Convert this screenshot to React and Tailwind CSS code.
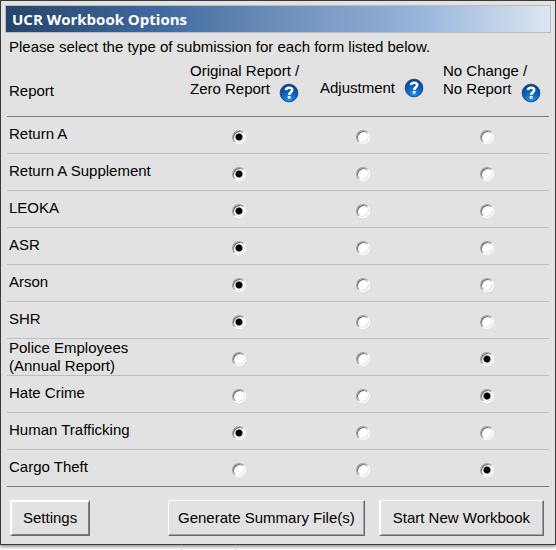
import { useState } from "react";
import clsx from "clsx";

const COLUMNS = [
    { id: "original", lines: ["Original Report /", "Zero Report"], cellClass: "pl-[13px]", gapClass: "gap-[9px]" },
    { id: "adjustment", lines: ["Adjustment"], cellClass: "pl-[19px]", gapClass: "gap-[9px]" },
    { id: "none", lines: ["No Change /", "No Report"], cellClass: "pl-[18px]", gapClass: "gap-[10px]" },
];

const REPORTS = [
    { id: "return-a", name: "Return A", initial: "original" },
    { id: "return-a-supplement", name: "Return A Supplement", initial: "original" },
    { id: "leoka", name: "LEOKA", initial: "original" },
    { id: "asr", name: "ASR", initial: "original" },
    { id: "arson", name: "Arson", initial: "original" },
    { id: "shr", name: "SHR", initial: "original" },
    { id: "police", name: "Police Employees", note: "(Annual Report)", initial: "none" },
    { id: "hate-crime", name: "Hate Crime", initial: "none" },
    { id: "trafficking", name: "Human Trafficking", initial: "original" },
    { id: "cargo-theft", name: "Cargo Theft", initial: "none" },
];

function HelpButton({ label }) {
    return (
        <button type="button" aria-label={`Help: ${label}`} className="block shrink-0">
            <svg viewBox="0 0 20 20" className="block h-5 w-5">
                <defs>
                    <radialGradient id="helpFill" cx="0.5" cy="0.85" r="0.85">
                        <stop offset="0" stopColor="#2196e8" />
                        <stop offset="0.5" stopColor="#0d62bd" />
                        <stop offset="1" stopColor="#0a3c86" />
                    </radialGradient>
                </defs>
                <circle cx="10" cy="10" r="9.7" fill="#c3ccd8" />
                <circle cx="10" cy="10" r="8.8" fill="url(#helpFill)" stroke="#1a3f78" strokeWidth="0.8" />
                <path
                    d="M6.9 7.1C7.1 5.5 8.3 4.7 10 4.7c2 0 3.2 0.9 3.2 2.4 0 2.1-3 2.2-3 4.8"
                    fill="none"
                    stroke="#fff"
                    strokeWidth="2.6"
                />
                <rect x="8.8" y="13" width="2.8" height="2.6" rx="0.6" fill="#fff" />
            </svg>
        </button>
    );
}

function ColumnHeader({ column }) {
    const last = column.lines[column.lines.length - 1];
    const stacked = column.lines.length > 1;

    return (
        <th scope="col" className={clsx("p-0 text-left align-top font-normal whitespace-nowrap", column.cellClass)}>
            {stacked && <div>{column.lines[0]}</div>}
            <div className={clsx("flex", column.gapClass, stacked ? "items-start" : "items-center pt-4")}>
                <span>{last}</span>
                <span className={stacked ? "pt-[3px]" : ""}>
                    <HelpButton label={column.lines.join(" ")} />
                </span>
            </div>
        </th>
    );
}

function OptionRadio({ name, label, checked, onChange }) {
    return (
        <input
            type="radio"
            name={name}
            aria-label={label}
            checked={checked}
            onChange={onChange}
            className="block mx-auto h-[14px] w-[14px] appearance-none rounded-full border border-t-[#a0a0a0] border-l-[#a0a0a0] border-r-white border-b-white bg-white shadow-[inset_1px_1px_0_#696969,inset_-1px_-1px_0_#e3e3e3] checked:bg-[radial-gradient(circle,#000_3px,#fff_4px)]"
        />
    );
}

function ReportRow({ report, value, onChange, isLast }) {
    return (
        <tr className={clsx("h-[37px] border-b", isLast ? "border-[#7a7a7a]" : "border-[#bdbdbd]")}>
            <th scope="row" className={clsx("p-0 pl-[2px] text-left font-normal", !report.note && "pb-[2px]")}>
                {report.name}
                {report.note && <div>{report.note}</div>}
            </th>
            {COLUMNS.map((column) => (
                <td key={column.id} className="p-0 pt-1 pr-px">
                    <OptionRadio
                        name={report.id}
                        label={`${report.name}: ${column.lines.join(" ")}`}
                        checked={value === column.id}
                        onChange={() => onChange(column.id)}
                    />
                </td>
            ))}
        </tr>
    );
}

function BevelButton({ className, children }) {
    return (
        <button
            type="button"
            className={clsx(
                "h-9 border border-t-white border-l-white border-r-[#696969] border-b-[#696969] whitespace-nowrap",
                className
            )}
        >
            {children}
        </button>
    );
}

export default function App() {
    const [choices, setChoices] = useState(() =>
        Object.fromEntries(REPORTS.map((report) => [report.id, report.initial]))
    );

    return (
        <div className="bg-white font-['Liberation_Sans',Arial,sans-serif] text-[15px] leading-[18px] text-black">
            <main className="border border-[#3a3a3a] bg-[#e2e2e2] px-1 pt-1 pb-2 shadow-[0_2px_3px_#999]">
                <h1 className="border border-[#b8bcc0] bg-[linear-gradient(to_right,#26446a,#40699e_28%,#6d8fba_50%,#95b3d9_75%,#dce6f1)] px-[6px] font-['Open_Sans',sans-serif] text-[15px] leading-[26px] font-bold text-white">
                    UCR Workbook Options
                </h1>

                <p className="px-1 pt-[5px]">Please select the type of submission for each form listed below.</p>

                <div className="px-[2px] pt-[6px]">
                    <table className="w-full table-fixed border-collapse">
                        <thead>
                            <tr className="h-[54px] border-b border-[#7a7a7a]">
                                <th scope="col" className="w-[170px] p-0 pt-5 pl-[2px] text-left align-top font-normal">
                                    Report
                                </th>
                                {COLUMNS.map((column) => (
                                    <ColumnHeader key={column.id} column={column} />
                                ))}
                            </tr>
                        </thead>
                        <tbody>
                            {REPORTS.map((report, i) => (
                                <ReportRow
                                    key={report.id}
                                    report={report}
                                    value={choices[report.id]}
                                    onChange={(id) => setChoices({ ...choices, [report.id]: id })}
                                    isLast={i === REPORTS.length - 1}
                                />
                            ))}
                        </tbody>
                    </table>
                </div>

                <div className="flex gap-[14px] pt-[13px] pr-[7px] pl-[5px]">
                    <BevelButton className="mr-auto px-3 shadow-[inset_1px_1px_0_#fff,inset_-1px_-1px_0_#808080]">
                        Settings
                    </BevelButton>
                    <BevelButton className="px-[9px] shadow-[inset_-1px_-1px_0_#a0a0a0]">
                        Generate Summary File(s)
                    </BevelButton>
                    <BevelButton className="px-[13px] shadow-[inset_1px_0_0_#fff,inset_-1px_-1px_0_#a0a0a0]">
                        Start New Workbook
                    </BevelButton>
                </div>
            </main>

            {/* sheet cells showing under the dialog */}
            <div className="flex h-[6px]">
                <div className="w-[182px] border-r border-[#d0d0d0]" />
                <div className="w-[54px] border-r border-[#d0d0d0]" />
            </div>
        </div>
    );
}
